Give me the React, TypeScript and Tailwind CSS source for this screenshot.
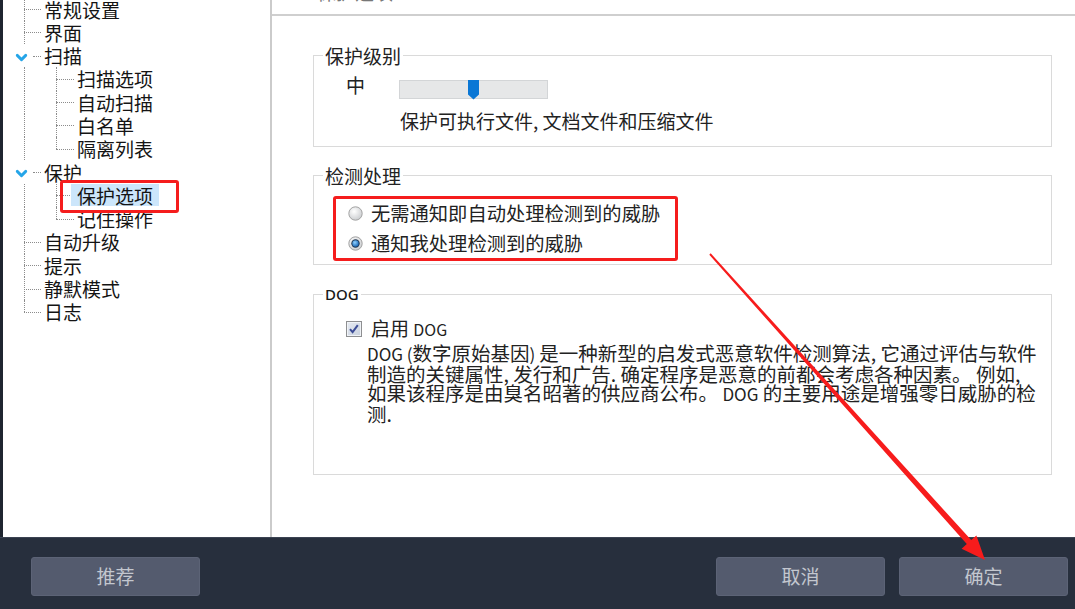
import { ChevronDown } from 'lucide-react';

type TreeRow = {
  label: string;
  level: 0 | 1;
  kind: 'tee' | 'last' | 'expander';
  selected?: boolean;
};

const rows: TreeRow[] = [
  { label: '常规设置', level: 0, kind: 'tee' },
  { label: '界面', level: 0, kind: 'tee' },
  { label: '扫描', level: 0, kind: 'expander' },
  { label: '扫描选项', level: 1, kind: 'tee' },
  { label: '自动扫描', level: 1, kind: 'tee' },
  { label: '白名单', level: 1, kind: 'tee' },
  { label: '隔离列表', level: 1, kind: 'last' },
  { label: '保护', level: 0, kind: 'expander' },
  { label: '保护选项', level: 1, kind: 'tee', selected: true },
  { label: '记住操作', level: 1, kind: 'last' },
  { label: '自动升级', level: 0, kind: 'tee' },
  { label: '提示', level: 0, kind: 'tee' },
  { label: '静默模式', level: 0, kind: 'tee' },
  { label: '日志', level: 0, kind: 'last' },
];

const dots = 'border-dotted border-[#8c8c8c]';

function TreeItem({ row }: { row: TreeRow }) {
  return (
    <div className="relative h-[23.3px] flex items-center">
      {/* level 0 connector */}
      {row.kind === 'expander' ? (
        <>
          <ChevronDown
            size={17}
            strokeWidth={4}
            className="absolute left-[10px] top-[5px] text-[#25a5e8]"
          />
          <span className={`absolute left-[30px] w-[8px] top-1/2 border-t ${dots}`} />
        </>
      ) : (
        <>
          <span
            className={`absolute left-[21px] top-0 border-l ${dots} ${
              row.kind === 'last' && row.level === 0 ? 'h-1/2' : 'h-full'
            }`}
          />
          {row.level === 0 && (
            <span className={`absolute left-[21px] w-[17px] top-1/2 border-t ${dots}`} />
          )}
        </>
      )}
      {/* level 1 connector */}
      {row.level === 1 && (
        <>
          <span
            className={`absolute left-[53px] top-0 border-l ${dots} ${
              row.kind === 'last' ? 'h-1/2' : 'h-full'
            }`}
          />
          <span className={`absolute left-[53px] w-[18px] top-1/2 border-t ${dots}`} />
        </>
      )}
      <span
        className={`relative h-[22px] flex items-center px-[6px] text-[19px] leading-[19px] text-[#141414] ${
          row.level === 0 ? 'ml-[35px]' : 'ml-[68px]'
        } ${row.selected ? 'bg-[#cce6fb]' : ''}`}
      >
        {row.label}
      </span>
    </div>
  );
}

function Radio({ checked }: { checked?: boolean }) {
  return (
    <svg width="15" height="15" viewBox="0 0 15 15" className="shrink-0">
      <defs>
        <radialGradient id={checked ? 'rgOn' : 'rgOff'} cx="40%" cy="35%" r="70%">
          <stop offset="0" stopColor="#ffffff" />
          <stop offset="1" stopColor="#c9cbce" />
        </radialGradient>
        <radialGradient id="rgBlue" cx="40%" cy="35%" r="70%">
          <stop offset="0" stopColor="#8fd0ff" />
          <stop offset="1" stopColor="#1362b3" />
        </radialGradient>
      </defs>
      <circle cx="7.5" cy="7.5" r="6.7" fill={`url(#${checked ? 'rgOn' : 'rgOff'})`} stroke="#a3a3a3" />
      {checked && (
        <>
          <circle cx="7.5" cy="7.5" r="4.2" fill="#20354f" />
          <circle cx="7.5" cy="7.5" r="3.2" fill="url(#rgBlue)" />
        </>
      )}
    </svg>
  );
}

function Checkbox() {
  return (
    <svg width="16" height="16" viewBox="0 0 16 16" className="shrink-0">
      <defs>
        <linearGradient id="cb" x1="0" y1="0" x2="1" y2="1">
          <stop offset="0" stopColor="#e8ecf3" />
          <stop offset="1" stopColor="#c6cfdd" />
        </linearGradient>
      </defs>
      <rect x="0.5" y="0.5" width="15" height="15" fill="url(#cb)" stroke="#8e8f91" />
      <rect x="1.5" y="1.5" width="13" height="13" fill="none" stroke="#f0f3f7" />
      <path d="M4 8.2 L6.6 11.2 L11.8 4.2" fill="none" stroke="#3c4c96" strokeWidth="2" />
    </svg>
  );
}

function Button({ label }: { label: string }) {
  return (
    <button className="w-[169px] h-[39px] rounded-[3px] bg-[#545b6e] border border-[#5c6376] text-[19px] text-[#c3c7cf] flex items-center justify-center">
      {label}
    </button>
  );
}

export default function App() {
  return (
    <div className="relative w-[1075px] h-[609px] overflow-hidden bg-white flex flex-col font-['Noto_Sans_CJK_SC','Noto_Sans',sans-serif]">
      <div className="flex h-[537px]">
        <div className="w-[3px] bg-[#1f2530]" />

        {/* tree */}
        <div className="w-[269px] border-r-2 border-[#cbcbcb] overflow-hidden">
          <div className="mt-[-2.65px]">
            {rows.map((r) => (
              <TreeItem key={r.label} row={r} />
            ))}
          </div>
        </div>

        {/* options */}
        <div className="flex-1 flex flex-col">
          <div className="h-[16px] border-b-2 border-[#cfcfcf] overflow-hidden">
            <div className="mt-[-18px] pl-[45px] text-[19px] leading-[19px] text-[#777]">保护选项</div>
          </div>

          <div className="pl-[41px] pr-[23px] pt-[30px] text-[19px] leading-[19px] text-[#222]">
            <fieldset className="border border-[#dadada] pb-[16px]">
              <legend className="ml-[9px] px-[2px]">保护级别</legend>
              <div className="flex items-start pt-[10px] pl-[32px]">
                <span>中</span>
                <div className="relative ml-[34px] mt-[4.5px] w-[149px] h-[19px] bg-[#e6e7e8] border border-[#d3d5d7]">
                  <svg width="11" height="20" viewBox="0 0 11 20" className="absolute left-[68px] top-[-1px]">
                    <path d="M0 0 H11 V14.5 L5.5 19.5 L0 14.5 Z" fill="#0a77d5" />
                  </svg>
                </div>
              </div>
              <div className="mt-[12.5px] ml-[86px]">保护可执行文件, 文档文件和压缩文件</div>
            </fieldset>

            <fieldset className="mt-[19px] border border-[#dadada] pt-[13px] pb-[6px]">
              <legend className="ml-[9px] px-[2px]">检测处理</legend>
              <div className="h-[30px] flex items-center pl-[34px] gap-[8px] text-[19.3px]">
                <Radio />
                <span>无需通知即自动处理检测到的威胁</span>
              </div>
              <div className="h-[30px] flex items-center pl-[34px] gap-[8px] text-[19.3px]">
                <Radio checked />
                <span>通知我处理检测到的威胁</span>
              </div>
            </fieldset>

            <fieldset className="mt-[20px] border border-[#dadada] pt-[15px] pb-[51px]">
              <legend className="ml-[9px] px-[2px] font-['Noto_Sans',sans-serif] font-medium text-[15px] text-[#1a1a1a]">
                DOG
              </legend>
              <div className="flex items-center h-[19px] pl-[32px] gap-[9px]">
                <Checkbox />
                <span>
                  启用 <span className="text-[16px]">DOG</span>
                </span>
              </div>
              <div className="mt-[5px] pl-[53px] text-[19.5px] leading-[19.5px] whitespace-nowrap">
                <div>
                  <span className="text-[17px]">DOG (</span>数字原始基因<span className="text-[17px]">) </span>
                  是一种新型的启发式恶意软件检测算法, 它通过评估与软件
                </div>
                <div>制造的关键属性, 发行和广告. 确定程序是恶意的前都会考虑各种因素。 例如,</div>
                <div>
                  如果该程序是由臭名昭著的供应商公布。 <span className="text-[17px]">DOG</span> 的主要用途是增强零日威胁的检
                </div>
                <div>测.</div>
              </div>
            </fieldset>
          </div>
        </div>
      </div>

      {/* footer */}
      <div className="flex-1 bg-[#272f3d] border-t border-[#3b4352] flex items-start pt-[19px] pl-[31px] pr-[7px]">
        <Button label="推荐" />
        <div className="flex-1" />
        <div className="flex gap-[14px]">
          <Button label="取消" />
          <Button label="确定" />
        </div>
      </div>

      {/* annotations */}
      <div className="absolute inset-0 pointer-events-none">
        <div className="absolute left-[60px] top-[180px] w-[119px] h-[33px] border-[3px] border-[#f51d1d] rounded-[3px]" />
        <div className="absolute left-[333px] top-[196px] w-[345px] h-[65px] border-[3px] border-[#f51d1d] rounded-[3px]" />
        <svg width="1075" height="609" className="absolute inset-0">
          <polygon
            points="709.3,254.7 966.8,544.1 961.6,548.8 985,560 976.4,535.4 971.2,540.1 710.7,253.3"
            fill="#f71c1c"
          />
        </svg>
      </div>
    </div>
  );
}
